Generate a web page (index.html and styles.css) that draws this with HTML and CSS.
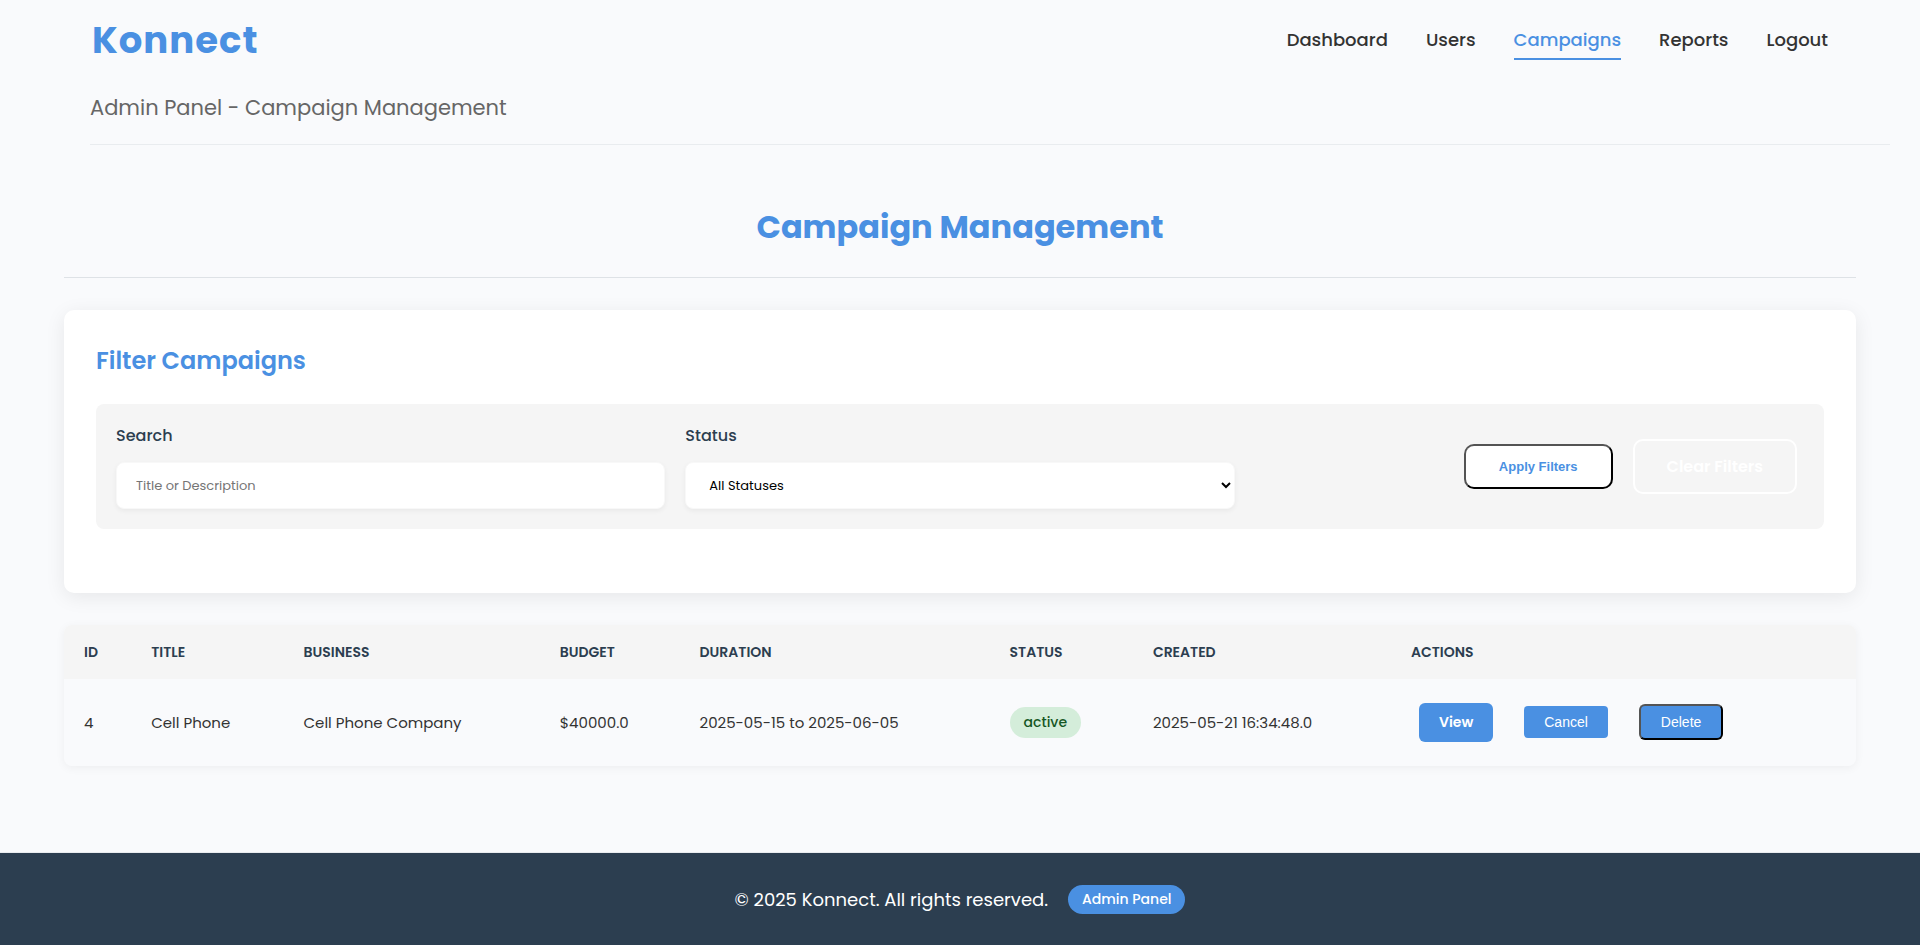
FILE: index.html
```html
<!DOCTYPE html>
<html lang="en">
<head>
<meta charset="utf-8">
<meta name="viewport" content="width=device-width, initial-scale=1">
<title>Konnect - Campaign Management</title>
<link rel="stylesheet" href="styles.css">
</head>
<body>
<header class="header">
  <div class="topbar">
    <div class="logo">Konnect</div>
    <nav class="nav">
      <a href="#">Dashboard</a>
      <a href="#">Users</a>
      <a href="#" class="active">Campaigns</a>
      <a href="#">Reports</a>
      <a href="#">Logout</a>
    </nav>
  </div>
  <p class="subtitle">Admin Panel - Campaign Management</p>
</header>
<main class="main">
  <h1 class="page-title">Campaign Management</h1>
  <section class="card">
    <h2 class="card-title">Filter Campaigns</h2>
    <form class="filters">
      <div class="field">
        <label for="search">Search</label>
        <input id="search" class="control" type="text" placeholder="Title or Description">
      </div>
      <div class="field">
        <label for="status">Status</label>
        <select id="status" class="control select"><option>All Statuses</option></select>
      </div>
      <div class="filter-actions">
        <button type="button" class="apply">Apply Filters</button>
        <a href="#" class="clear">Clear Filters</a>
      </div>
    </form>
  </section>
  <table class="table">
    <colgroup>
      <col class="c-id"><col class="c-title"><col class="c-business"><col class="c-budget"><col class="c-duration"><col class="c-status"><col class="c-created"><col>
    </colgroup>
    <thead>
      <tr><th>ID</th><th>TITLE</th><th>BUSINESS</th><th>BUDGET</th><th>DURATION</th><th>STATUS</th><th>CREATED</th><th>ACTIONS</th></tr>
    </thead>
    <tbody>
      <tr>
        <td>4</td><td>Cell Phone</td><td>Cell Phone Company</td><td>$40000.0</td><td>2025-05-15 to 2025-06-05</td>
        <td><span class="status">active</span></td>
        <td>2025-05-21 16:34:48.0</td>
        <td><div class="row-actions">
          <a href="#" class="view">View</a>
          <button type="button" class="cancel">Cancel</button>
          <button type="button" class="delete">Delete</button>
        </div></td>
      </tr>
    </tbody>
  </table>
</main>
<footer class="footer">
  <span>© 2025 Konnect. All rights reserved.</span>
  <span class="badge">Admin Panel</span>
</footer>
</body>
</html>
```
FILE: styles.css
```css
* { box-sizing: border-box; }

body {
  margin: 0;
  min-height: 100vh;
  display: flex;
  flex-direction: column;
  background: #f9fafc;
  color: #333;
  font-family: Poppins, Inter, sans-serif;
  font-size: 15px;
}

a { text-decoration: none; }

.header { padding: 0 30px 0 90px; }

.topbar {
  display: flex;
  justify-content: space-between;
  align-items: center;
  height: 80px;
  padding: 0 62px 0 2px;
}

.logo { color: #4a90e2; font-size: 37px; font-weight: 700; letter-spacing: 1px; }

.nav { display: flex; gap: 38px; }
.nav a {
  padding: 5px 0;
  border-bottom: 2px solid transparent;
  color: #333;
  font-size: 18px;
  font-weight: 500;
  line-height: 27px;
}
.nav a.active { color: #4a90e2; border-bottom-color: #4a90e2; }

.subtitle {
  margin: 0;
  padding: 12px 0 20px;
  border-bottom: 1px solid #e9ecef;
  color: #666;
  font-size: 21px;
  line-height: 32px;
}

.main { flex: 1; padding: 57px 64px 64px; }

.page-title {
  margin: 0 0 32px;
  padding-bottom: 25px;
  border-bottom: 1px solid #dee2e6;
  color: #4a90e2;
  font-size: 32px;
  font-weight: 700;
  line-height: 50px;
  text-align: center;
}

.card {
  margin-bottom: 32px;
  padding: 32px 32px 64px;
  border-radius: 10px;
  background: #fff;
  box-shadow: 0 4px 20px rgba(0, 0, 0, 0.08);
}

.card-title {
  margin: 0 0 24px;
  color: #4a90e2;
  font-size: 24px;
  font-weight: 600;
  line-height: 38px;
}

.filters {
  display: grid;
  grid-template-columns: repeat(3, 1fr);
  gap: 20px;
  padding: 20px;
  border-radius: 8px;
  background: #f5f5f5;
}

.field { display: flex; flex-direction: column; gap: 14px; }
.field label { color: #2c3e50; font-size: 16px; font-weight: 500; line-height: 24px; }

.control {
  width: 100%;
  height: 47px;
  padding: 0 19px;
  border: 1px solid #f8f8f8;
  border-radius: 8px;
  background: #fff;
  color: #000;
  font-family: inherit;
  font-size: 13px;
  box-shadow: 0 2px 5px rgba(0, 0, 0, 0.05);
}
.control::placeholder { color: #757575; }

.filter-actions {
  display: flex;
  justify-content: flex-end;
  align-items: center;
  gap: 20px;
  padding-right: 7px;
}

.apply {
  padding: 13px 33px;
  border: 2px outset #000;
  border-radius: 10px;
  background: #fff;
  color: #4a90e2;
  font: 700 13px/15px "Liberation Sans", Arial, sans-serif;
}

.clear {
  padding: 13px 32px;
  border: 2px solid #fff;
  border-radius: 10px;
  color: #fff;
  font-size: 16px;
  font-weight: 600;
  line-height: 25px;
}

.table {
  width: 100%;
  table-layout: fixed;
  border-collapse: separate;
  border-spacing: 0;
  border-radius: 8px;
  overflow: hidden;
  box-shadow: 0 2px 10px rgba(0, 0, 0, 0.05);
}
.table th, .table td { padding: 0 20px; text-align: left; white-space: nowrap; }
.table th { height: 54px; background: #f5f5f5; color: #2c3e50; font-size: 14px; font-weight: 600; }
.table td { height: 87px; color: #333; }

.c-id { width: 3.75%; }
.c-title { width: 8.5%; }
.c-business { width: 14.3%; }
.c-budget { width: 7.8%; }
.c-duration { width: 17.3%; }
.c-status { width: 8%; }
.c-created { width: 14.4%; }

.status {
  display: inline-block;
  padding: 5px 14px;
  border-radius: 16px;
  background: #d4edda;
  color: #155724;
  font-size: 14px;
  font-weight: 500;
  line-height: 21px;
}

.row-actions { display: flex; align-items: baseline; gap: 31px; padding-left: 8px; }

.view {
  padding: 9px 20px;
  border-radius: 6px;
  background: #4a90e2;
  color: #fff;
  font-size: 14px;
  font-weight: 600;
  line-height: 21px;
}

.cancel, .delete {
  background: #4a90e2;
  color: #fff;
  font: 14px/16px "Liberation Sans", Arial, sans-serif;
}
.cancel { padding: 8px 20px; border: 0; border-radius: 4px; }
.delete { padding: 8px 20px; border: 2px outset #000; border-radius: 6px; }

.footer {
  display: flex;
  justify-content: center;
  align-items: center;
  gap: 20px;
  height: 93px;
  border-top: 1px solid #e9ecef;
  background: #2c3e50;
  color: #fff;
  font-size: 18px;
}

.badge {
  padding: 4px 14px;
  border-radius: 16px;
  background: #4a90e2;
  font-size: 14px;
  font-weight: 500;
  line-height: 21px;
}
```
